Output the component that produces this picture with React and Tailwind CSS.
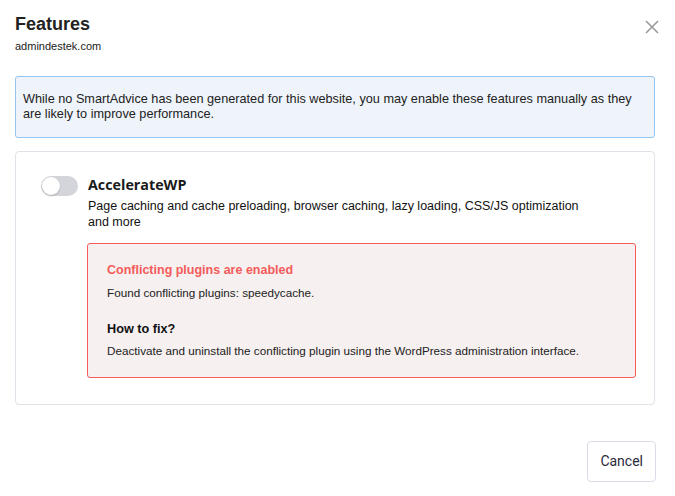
import React from 'react';

const App = () => {
  return (
    <div className="w-[675px] h-[496px] bg-white pl-[15px] pr-[16px] pt-[13px] font-['Liberation_Sans',Arial,sans-serif] text-[#222]">
      {/* Header */}
      <div className="flex justify-between items-start">
        <div>
          <h2 className="text-[18px] leading-[22px] font-bold text-[#222]">Features</h2>
          <p className="mt-[4px] text-[11px] leading-[14px] text-[#222]">admindestek.com</p>
        </div>
        <button className="mt-[7px] text-[#9a9a9a]" aria-label="Close">
          <svg width="14" height="14" viewBox="0 0 14 14" fill="none" stroke="currentColor" strokeWidth="1.6">
            <path d="M1 1 L13 13 M13 1 L1 13" />
          </svg>
        </button>
      </div>

      <div className="mr-[4px]">
        {/* Info notice */}
        <div className="mt-[23px] border border-[#92c5ef] bg-[#eff4fb] rounded-[3px] pl-[7px] pr-[20px] py-[15px]">
          <p className="text-[12.7px] leading-[15px] text-[#222]">
            While no SmartAdvice has been generated for this website, you may enable these features manually as they are likely to improve performance.
          </p>
        </div>

        {/* Feature card */}
        <div className="mt-[13px] border border-[#e1e1e9] rounded-[4px] pl-[25px] pr-[18px] pt-[23px] pb-[26px] flex gap-[10px]">
          <div className="w-[37px] h-[20px] rounded-full bg-[#d3d5da] relative shrink-0 mt-[1px]">
            <span className="absolute left-[1px] top-[1px] w-[18px] h-[18px] rounded-full bg-white shadow-[0_1px_2px_rgba(0,0,0,0.2)]" />
          </div>
          <div className="flex-1">
            <h3 className="font-['Open_Sans',sans-serif] font-bold text-[14.3px] leading-[20px] text-[#1a1a1a]">AccelerateWP</h3>
            <p className="mt-[3px] max-w-[510px] text-[12.5px] leading-[16px] text-[#111]">
              Page caching and cache preloading, browser caching, lazy loading, CSS/JS optimization and more
            </p>
            <div className="mt-[13px] -ml-[1px] border border-[#f55b5b] bg-[#f6f0f0] rounded-[3px] px-[19px] pt-[18px] pb-[18px]">
              <p className="text-[12.5px] leading-[16px] font-bold text-[#f45b5b]">Conflicting plugins are enabled</p>
              <p className="mt-[7px] text-[11.7px] leading-[16px] text-[#222]">Found conflicting plugins: speedycache.</p>
              <p className="mt-[20px] text-[12.7px] leading-[16px] font-bold text-[#111]">How to fix?</p>
              <p className="mt-[6px] text-[11.7px] leading-[16px] text-[#222]">
                Deactivate and uninstall the conflicting plugin using the WordPress administration interface.
              </p>
            </div>
          </div>
        </div>

        {/* Footer */}
        <div className="mt-[36px] flex justify-end -mr-[1px]">
          <button className="h-[41px] px-[12px] border border-[#dcdce6] rounded-[4px] bg-white text-[14px] font-['Roboto',sans-serif] text-[#2a2a3a]">
            Cancel
          </button>
        </div>
      </div>
    </div>
  );
};

export default App;
